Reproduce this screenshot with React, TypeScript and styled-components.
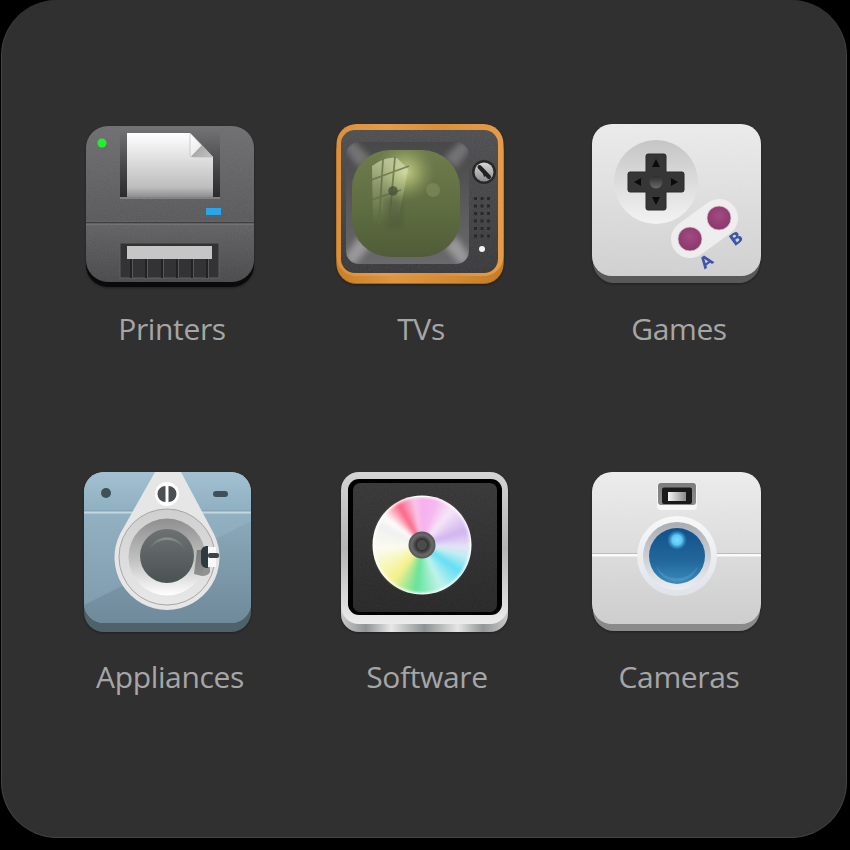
import React from 'react';
import styled, { createGlobalStyle } from 'styled-components';

const Global = createGlobalStyle`
  html, body { margin: 0; padding: 0; background: #000; }
  #root { width: 850px; height: 850px; overflow: hidden; }
`;

const Panel = styled.main`
  box-sizing: border-box;
  width: 846px;
  height: 838px;
  margin-left: 1px;
  padding: 124px 0 0 81px;
  background: #303030;
  border: 1px solid #434348;
  border-top: 0;
  border-radius: 56px;
  display: grid;
  grid-template-columns: 252px 256px 170px;
  grid-template-rows: 348px 240px;
`;

const Tile = styled.figure<{ $left?: number }>`
  margin: 0 0 0 ${p => p.$left ?? 0}px;
  width: 170px;
  display: flex;
  flex-direction: column;
  align-items: center;
`;

const Art = styled.svg`
  display: block;
  width: 172px;
  height: 164px;
  flex: none;
  align-self: flex-start;
  overflow: visible;
  filter: drop-shadow(0 1px 1px rgba(0, 0, 0, 0.35));
`;

const Label = styled.figcaption<{ $shift?: number }>`
  margin: 22px 0 0 ${p => p.$shift ?? 0}px;
  font: 400 30px/38px "Open Sans", "Liberation Sans", sans-serif;
  letter-spacing: -0.35px;
  color: #a6a6a6;
  white-space: nowrap;
`;

const Disc = styled.div`
  width: 96px;
  height: 96px;
  border-radius: 50%;
  filter: blur(1.5px);
  background: conic-gradient(
    from 0deg,
    #f7b0ee 0deg, #f5b8f0 18deg, #f6e6f8 40deg, #d0b4f0 72deg, #e6e2f6 92deg, #bfeef2 105deg,
    #62def6 125deg, #c0f3ea 155deg, #66e39a 188deg, #f5f08c 218deg, #f6f8c0 245deg,
    #fbfbf0 265deg, #f0f0f0 295deg, #fdfdfd 308deg, #fb6486 330deg, #f8c6e6 350deg, #f7b0ee 360deg
  );
`;

const Noise = ({ id, op = 0.1 }: { id: string; op?: number }) => (
  <filter id={id} x="0" y="0" width="100%" height="100%">
    <feTurbulence type="fractalNoise" baseFrequency="0.9" numOctaves="2" seed="4" />
    <feColorMatrix values={`0 0 0 0 0.5 0 0 0 0 0.5 0 0 0 0 0.5 ${op * 2} 0 0 0 0`} />
    <feComposite in2="SourceAlpha" operator="in" />
  </filter>
);

const Printer = () => (
  <Art viewBox="0 0 172 164">
    <defs>
      <linearGradient id="prBody" x1="0" y1="0" x2="0" y2="1">
        <stop offset="0" stopColor="#6b6b6e" /><stop offset=".6" stopColor="#555557" /><stop offset=".62" stopColor="#5e5e60" /><stop offset="1" stopColor="#444446" />
      </linearGradient>
      <linearGradient id="prSlot" x1="0" y1="0" x2="0" y2="1">
        <stop offset="0" stopColor="#747477" /><stop offset=".6" stopColor="#444446" /><stop offset="1" stopColor="#2a2a2c" />
      </linearGradient>
      <linearGradient id="prPaper" x1="0" y1="0" x2="0" y2="1">
        <stop offset="0" stopColor="#fff" /><stop offset=".85" stopColor="#bdbdbd" /><stop offset="1" stopColor="#8e8e8e" />
      </linearGradient>
      <linearGradient id="prFold" x1="0" y1="0" x2="1" y2="1">
        <stop offset="0" stopColor="#fff" /><stop offset=".5" stopColor="#eee" /><stop offset=".52" stopColor="#aaa" /><stop offset="1" stopColor="#c4c4c4" />
      </linearGradient>
      <Noise id="prN" op={0.08} />
    </defs>
    <rect x="2" y="7" width="168" height="156" rx="22" fill="#0a0a0a" />
    <rect x="2" y="2" width="168" height="156" rx="22" fill="url(#prBody)" />
    <rect x="2" y="2" width="168" height="156" rx="22" fill="#fff" filter="url(#prN)" />
    <rect x="36" y="3" width="100" height="71" fill="url(#prSlot)" />
    <rect x="36" y="73" width="100" height="2" fill="#828285" />
    <path d="M43 9 H106 L129 33 V73 H43 Z" fill="url(#prPaper)" />
    <path d="M106 9 L129 33 H109 Q106 33 106 30 Z" fill="url(#prFold)" stroke="#b4b4b4" strokeWidth=".6" />
    <circle cx="18" cy="19" r="4.5" fill="#22f02c" />
    <rect x="122" y="84" width="15" height="7" fill="#2ba4ec" />
    <rect x="2" y="98" width="168" height="1.5" fill="#3f3f41" />
    <rect x="2" y="99.5" width="168" height="1.5" fill="#727275" />
    <rect x="36" y="119" width="99" height="35" fill="#333335" stroke="#606063" strokeWidth="1" />
    <rect x="43" y="122" width="85" height="13" fill="#c6c6c6" />
    {[46, 61, 77, 92, 107, 122].map(x => (
      <g key={x}><rect x={x} y="135" width="2" height="19" fill="#222224" /><rect x={x + 2} y="135" width="1" height="19" fill="#58585a" /></g>
    ))}
  </Art>
);

const Tv = () => (
  <Art viewBox="0 0 172 164">
    <defs>
      <linearGradient id="tvWood" x1="0" y1="0" x2="1" y2="0">
        <stop offset="0" stopColor="#dc8f38" /><stop offset=".3" stopColor="#e49c48" /><stop offset=".6" stopColor="#dc8f38" /><stop offset="1" stopColor="#e59c48" />
      </linearGradient>
      <linearGradient id="tvSide" x1="0" y1="0" x2="1" y2="0">
        <stop offset="0" stopColor="#c97f28" /><stop offset=".35" stopColor="#e09540" /><stop offset=".7" stopColor="#d48a30" /><stop offset="1" stopColor="#c67c26" />
      </linearGradient>
      <linearGradient id="tvBody" x1="0" y1="0" x2="0" y2="1">
        <stop offset="0" stopColor="#4a4a4c" /><stop offset="1" stopColor="#343436" />
      </linearGradient>
      <linearGradient id="tvBezel" x1="0" y1="0" x2="0" y2="1">
        <stop offset="0" stopColor="#484849" /><stop offset="1" stopColor="#6a6a6c" />
      </linearGradient>
      <linearGradient id="tvScreen" x1="0" y1="0" x2="0" y2="1">
        <stop offset="0" stopColor="#6f7c4c" /><stop offset=".6" stopColor="#5d6b40" /><stop offset="1" stopColor="#505c38" />
      </linearGradient>
      <radialGradient id="tvGlow" cx=".5" cy=".5" r=".5">
        <stop offset="0" stopColor="#c9d48f" stopOpacity=".95" /><stop offset=".45" stopColor="#afbc74" stopOpacity=".6" /><stop offset="1" stopColor="#8a9860" stopOpacity="0" />
      </radialGradient>
      <linearGradient id="tvWin" x1="0" y1="0" x2="0" y2="1">
        <stop offset="0" stopColor="#e4ecc4" stopOpacity=".6" /><stop offset="1" stopColor="#b4bf8c" stopOpacity="0" />
      </linearGradient>
      <linearGradient id="tvKnob" x1="0" y1="0" x2="0" y2="1">
        <stop offset="0" stopColor="#d8d8d8" /><stop offset="1" stopColor="#8d8d8d" />
      </linearGradient>
      <Noise id="tvN" op={0.08} />
      <filter id="tvB"><feGaussianBlur stdDeviation="3" /></filter>
      <filter id="tvB1"><feGaussianBlur stdDeviation=".5" /></filter>
      <clipPath id="tvClip"><rect x="17" y="26" width="108" height="107" rx="38" /></clipPath>
      <clipPath id="tvBezelClip"><rect x="11" y="18" width="123" height="122" rx="13" /></clipPath>
    </defs>
    <rect x="1.500" y="8" width="167" height="152" rx="20" fill="#a9671c" />
    <rect x="1.500" y="6" width="167" height="153" rx="20" fill="url(#tvSide)" />
    <rect x="1.500" y="0" width="167" height="152" rx="20" fill="url(#tvWood)" />
    <rect x="6" y="6" width="157" height="143" rx="14" fill="url(#tvBody)" />
    <rect x="6" y="6" width="157" height="143" rx="14" fill="#fff" filter="url(#tvN)" />
    <rect x="11" y="18" width="123" height="122" rx="13" fill="url(#tvBezel)" />
    <g clipPath="url(#tvBezelClip)">
      <g filter="url(#tvB)" opacity=".8">
        <path d="M18 16 L36 34 L24 44 L9 24 Z M127 16 L109 34 L121 44 L136 24 Z" fill="#7e7e80" />
        <path d="M18 142 L36 122 L24 112 L9 134 Z M127 142 L109 122 L121 112 L136 134 Z" fill="#a6a6a8" />
      </g>
    </g>
    <rect x="17" y="26" width="108" height="107" rx="38" fill="url(#tvScreen)" />
    <g clipPath="url(#tvClip)">
      <circle cx="70" cy="48" r="30" fill="url(#tvGlow)" />
      <circle cx="98" cy="66" r="7" fill="#879463" opacity=".5" />
      <g filter="url(#tvB1)">
        <path d="M37 42 Q50 32 62 34 L73 45 L70 62 L62 100 L38 100 Z" fill="url(#tvWin)" />
        <path d="M48 35 L44 100 M60 33 L54 100 M36 56 L74 42 M36 76 L66 66" stroke="#5f6d42" strokeWidth="1.800" opacity=".75" fill="none" />
      </g>
      <circle cx="58" cy="67" r="4.800" fill="#48533a" opacity=".8" />
      <path d="M50 74 Q58 70 66 76 L68 104 L52 104 Z" fill="#48533a" opacity=".4" filter="url(#tvB)" />
    </g>
    <circle cx="149" cy="48" r="12" fill="#29292a" />
    <circle cx="149" cy="48" r="9.500" fill="url(#tvKnob)" />
    <path d="M144.500 43 L154 53" stroke="#222" strokeWidth="4" strokeLinecap="round" />
    <path d="M146.500 45 L149 53 L152 51 Z" fill="#222" />
    {[0, 1, 2, 3, 4, 5].map(r => [0, 1, 2].map(c => (
      <rect key={`${r}-${c}`} x={139 + c * 6.500} y={73 + r * 7.500} width="3" height="3" fill="#29292c" />
    )))}
    <circle cx="147" cy="125" r="3" fill="#f4f4f4" />
  </Art>
);

const Games = () => (
  <Art viewBox="0 0 172 164">
    <defs>
      <linearGradient id="gaBody" x1="0" y1="0" x2="0" y2="1">
        <stop offset="0" stopColor="#eeeeee" /><stop offset="1" stopColor="#d2d2d2" />
      </linearGradient>
      <linearGradient id="gaDisc" x1="0" y1="0" x2="0" y2="1">
        <stop offset="0" stopColor="#c5c5c5" /><stop offset="1" stopColor="#f3f3f3" />
      </linearGradient>
      <linearGradient id="gaHub" x1="0" y1="0" x2="0" y2="1">
        <stop offset="0" stopColor="#2b2b2b" /><stop offset="1" stopColor="#6a6a6a" />
      </linearGradient>
      <radialGradient id="gaBtn" cx=".5" cy=".4" r=".6">
        <stop offset="0" stopColor="#a34a85" /><stop offset="1" stopColor="#8a3868" />
      </radialGradient>
      <Noise id="gaN" op={0.06} />
    </defs>
    <rect x="2" y="6" width="167" height="153" rx="21" fill="#595959" />
    <rect x="1" y="0" width="169" height="152" rx="20" fill="url(#gaBody)" />
    <rect x="1" y="0" width="169" height="152" rx="20" fill="#fff" filter="url(#gaN)" />
    <circle cx="65" cy="58" r="42" fill="url(#gaDisc)" />
    <path d="M55 32 Q55 30 57 30 H73 Q75 30 75 32 V48 H91 Q93 48 93 50 V66 Q93 68 91 68 H75 V84 Q75 86 73 86 H57 Q55 86 55 84 V68 H39 Q37 68 37 66 V50 Q37 48 39 48 H55 Z" fill="#363636" stroke="#2a2a2a" />
    <path d="M65 35 L69 43 H61 Z M65 81 L69 73 H61 Z M43 58 L50 54 V62 Z M87 58 L80 54 V62 Z" fill="#0b0b0b" />
    <circle cx="65" cy="58" r="6.500" fill="url(#gaHub)" />
    <rect x="76.500" y="85.500" width="74" height="38" rx="19" transform="rotate(-36 113.500 104.500)" fill="#f2f2f2" opacity=".8" />
    <circle cx="99" cy="115" r="12" fill="url(#gaBtn)" stroke="#d8c8d2" strokeWidth=".8" />
    <circle cx="128" cy="94" r="12" fill="url(#gaBtn)" stroke="#d8c8d2" strokeWidth=".8" />
    <text x="115" y="143" transform="rotate(-36 115 137)" fontFamily='"DejaVu Sans", sans-serif' fontWeight="700" fontSize="16" fill="#3f56a6" textAnchor="middle">A</text>
    <text x="145" y="120" transform="rotate(-36 145 114)" fontFamily='"DejaVu Sans", sans-serif' fontWeight="700" fontSize="16" fill="#3f56a6" textAnchor="middle">B</text>
  </Art>
);

const Appliances = () => (
  <Art viewBox="0 0 172 164">
    <defs>
      <linearGradient id="apTop" x1="0" y1="0" x2="0" y2="1">
        <stop offset="0" stopColor="#a2c0d0" /><stop offset="1" stopColor="#8fb0c2" />
      </linearGradient>
      <linearGradient id="apBody" x1="0" y1="0" x2="0" y2="1">
        <stop offset="0" stopColor="#9ab9c9" /><stop offset="1" stopColor="#7c9aac" />
      </linearGradient>
      <linearGradient id="apShade" x1="0" y1="0" x2="0" y2="1">
        <stop offset="0" stopColor="#8aa8b9" /><stop offset="1" stopColor="#6f8a9a" />
      </linearGradient>
      <linearGradient id="apRim" x1="0" y1="0" x2="0" y2="1">
        <stop offset="0" stopColor="#cfcfcf" /><stop offset="1" stopColor="#e8e8e8" />
      </linearGradient>
      <linearGradient id="apRing" x1="0" y1="0" x2="0" y2="1">
        <stop offset="0" stopColor="#8f8f8f" /><stop offset=".55" stopColor="#c2c2c2" /><stop offset="1" stopColor="#fff" />
      </linearGradient>
      <linearGradient id="apDoor" x1="0" y1="0" x2="0" y2="1">
        <stop offset="0" stopColor="#6d7172" /><stop offset="1" stopColor="#4b5254" />
      </linearGradient>
      <linearGradient id="apArc" x1="0" y1="0" x2="0" y2="1">
        <stop offset="0" stopColor="#8d9395" /><stop offset="1" stopColor="#5a6062" stopOpacity="0" />
      </linearGradient>
      <clipPath id="apClip"><rect x="0" y="0" width="167" height="151" rx="20" /></clipPath>
    </defs>
    <rect x="0" y="6" width="167" height="154" rx="20" fill="#4f6169" />
    <rect x="0" y="0" width="167" height="151" rx="20" fill="url(#apBody)" />
    <g clipPath="url(#apClip)">
      <rect width="167" height="40" fill="url(#apTop)" />
      <rect y="38.500" width="167" height="1" fill="#7d9bad" />
      <rect y="39.500" width="167" height="2" fill="#c3d7e1" />
      <path d="M0 133 L167 49 V151 H0 Z" fill="url(#apShade)" />
    </g>
    <circle cx="22" cy="21" r="5" fill="#3f5059" />
    <rect x="129" y="19" width="15" height="6" rx="3" fill="#3f5059" />
    <path d="M71 0 H97 L130 62 A52.500 52.500 0 1 1 36 62 Z" fill="#e6e6e6" />
    <circle cx="83" cy="22" r="12" fill="#fff" />
    <path d="M81.500 14 A8 8 0 0 0 81.500 30 Z M84.500 14 A8 8 0 0 1 84.500 30 Z" fill="#4b4f51" />
    <circle cx="83" cy="85" r="48" fill="url(#apRim)" stroke="#a6a6a6" strokeWidth="1" />
    <circle cx="83" cy="85" r="38.500" fill="url(#apRing)" />
    <circle cx="83" cy="84" r="27" fill="url(#apDoor)" />
    <path d="M63.500 85 A19.500 19.500 0 0 1 102.500 85 A19.500 17 0 0 0 63.500 85 Z" fill="url(#apArc)" />
    <path d="M113 78 H126 V100 Q124 104 118 104 L110 102 Z" fill="#444" opacity=".5" />
    <rect x="123" y="75" width="9" height="20" fill="#f8f8f8" />
    <path d="M122 74 Q117 75 117 80 V90 Q117 95 122 96 H124 V74 Z" fill="#2e3a40" />
    <rect x="124" y="81" width="11" height="5" rx="2" fill="#3a464c" />
  </Art>
);

const Software = () => (
  <Art viewBox="0 0 172 164">
    <defs>
      <linearGradient id="soBase" x1="0" y1="0" x2="1" y2="0">
        <stop offset="0" stopColor="#c9c9c9" /><stop offset=".15" stopColor="#8f9494" /><stop offset=".3" stopColor="#e7e7e7" /><stop offset=".5" stopColor="#8d9292" /><stop offset=".7" stopColor="#e5e5e5" /><stop offset=".85" stopColor="#929696" /><stop offset="1" stopColor="#c9c9c9" />
      </linearGradient>
      <linearGradient id="soFrame" x1="0" y1="0" x2="0" y2="1">
        <stop offset="0" stopColor="#d4d4d4" /><stop offset=".5" stopColor="#b4b4b4" /><stop offset="1" stopColor="#ececec" />
      </linearGradient>
      <linearGradient id="soInner" x1="0" y1="0" x2="0" y2="1">
        <stop offset="0" stopColor="#343435" /><stop offset="1" stopColor="#242425" />
      </linearGradient>
      <radialGradient id="soHub" cx=".5" cy=".5" r=".5">
        <stop offset="0" stopColor="#4b4b4b" /><stop offset=".35" stopColor="#4b4b4b" /><stop offset=".4" stopColor="#2f2f2f" /><stop offset=".75" stopColor="#6a6a6a" /><stop offset="1" stopColor="#555" />
      </radialGradient>
      <Noise id="soN" op={0.05} />
    </defs>
    <rect x="1" y="7" width="167" height="153" rx="18" fill="url(#soBase)" />
    <rect x="1" y="0" width="167" height="152" rx="18" fill="url(#soFrame)" />
    <rect x="8" y="7" width="154" height="136" rx="11" fill="#000" />
    <rect x="13" y="11" width="144" height="129" rx="7" fill="url(#soInner)" />
    <rect x="13" y="11" width="144" height="129" rx="7" fill="#fff" filter="url(#soN)" />
    <circle cx="82" cy="73" r="49.500" fill="#fff" />
    <foreignObject x="34" y="25" width="96" height="96">
      <Disc />
    </foreignObject>
    <circle cx="82" cy="73" r="13.500" fill="url(#soHub)" />
  </Art>
);

const Cameras = () => (
  <Art viewBox="0 0 172 164">
    <defs>
      <linearGradient id="caBody" x1="0" y1="0" x2="0" y2="1">
        <stop offset="0" stopColor="#efefef" /><stop offset="1" stopColor="#cfcfcf" />
      </linearGradient>
      <linearGradient id="caView" x1="0" y1="0" x2="0" y2="1">
        <stop offset="0" stopColor="#7d7d7d" /><stop offset="1" stopColor="#8c8c8c" />
      </linearGradient>
      <linearGradient id="caGlass" x1="0" y1="0" x2="1" y2="0">
        <stop offset="0" stopColor="#f5f5f5" /><stop offset="1" stopColor="#8a8a8a" />
      </linearGradient>
      <linearGradient id="caRing" x1="0" y1="0" x2="0" y2="1">
        <stop offset="0" stopColor="#f8f8f8" /><stop offset="1" stopColor="#dfe3ea" />
      </linearGradient>
      <linearGradient id="caRing2" x1="0" y1="0" x2="0" y2="1">
        <stop offset="0" stopColor="#a9aeb4" /><stop offset="1" stopColor="#eceef1" />
      </linearGradient>
      <linearGradient id="caLens" x1="0" y1="0" x2="0" y2="1">
        <stop offset="0" stopColor="#11508a" /><stop offset=".6" stopColor="#22689c" /><stop offset="1" stopColor="#3a8cbc" />
      </linearGradient>
      <radialGradient id="caGlint" cx=".5" cy=".5" r=".5">
        <stop offset="0" stopColor="#7ae0ff" /><stop offset=".5" stopColor="#5bc8f5" /><stop offset="1" stopColor="#3a9bd6" stopOpacity="0" />
      </radialGradient>
      <Noise id="caN" op={0.06} />
    </defs>
    <rect x="2" y="6" width="167" height="153" rx="21" fill="#8a8a8a" />
    <rect x="1" y="0" width="169" height="152" rx="20" fill="url(#caBody)" />
    <rect x="1" y="0" width="169" height="152" rx="20" fill="#fff" filter="url(#caN)" />
    <rect x="1" y="81" width="169" height="1" fill="#bbb" />
    <rect x="1" y="82" width="169" height="2.500" fill="#fafafa" />
    <rect x="66" y="11" width="40" height="27" rx="4" fill="#f7f7f7" />
    <rect x="67" y="11" width="38" height="22" rx="3" fill="url(#caView)" />
    <rect x="71" y="15.500" width="30" height="16.500" rx="2" fill="#1a1a1a" />
    <rect x="77" y="20" width="18" height="9" fill="url(#caGlass)" />
    <circle cx="86" cy="84" r="40" fill="url(#caRing)" />
    <circle cx="86" cy="84" r="34" fill="url(#caRing2)" />
    <circle cx="86" cy="84" r="28" fill="url(#caLens)" />
    <path d="M65 94 A22 22 0 0 0 107 94 A24 24 0 0 1 65 94 Z" fill="#5aa4cc" opacity=".45" />
    <circle cx="86" cy="68" r="10" fill="url(#caGlint)" />
  </Art>
);

const items = [
  { name: 'Printers', Icon: Printer, left: 1, shift: 6 },
  { name: 'TVs', Icon: Tv, left: 0, shift: 2 },
  { name: 'Games', Icon: Games, left: 0, shift: 6 },
  { name: 'Appliances', Icon: Appliances, left: 1, shift: 2 },
  { name: 'Software', Icon: Software, left: 5, shift: 4 },
  { name: 'Cameras', Icon: Cameras, left: 0, shift: 6 },
];

export default function App() {
  return (
    <>
      <Global />
      <Panel>
        {items.map(({ name, Icon, left, shift }) => (
          <Tile key={name} $left={left}>
            <Icon />
            <Label $shift={shift}>{name}</Label>
          </Tile>
        ))}
      </Panel>
    </>
  );
}
